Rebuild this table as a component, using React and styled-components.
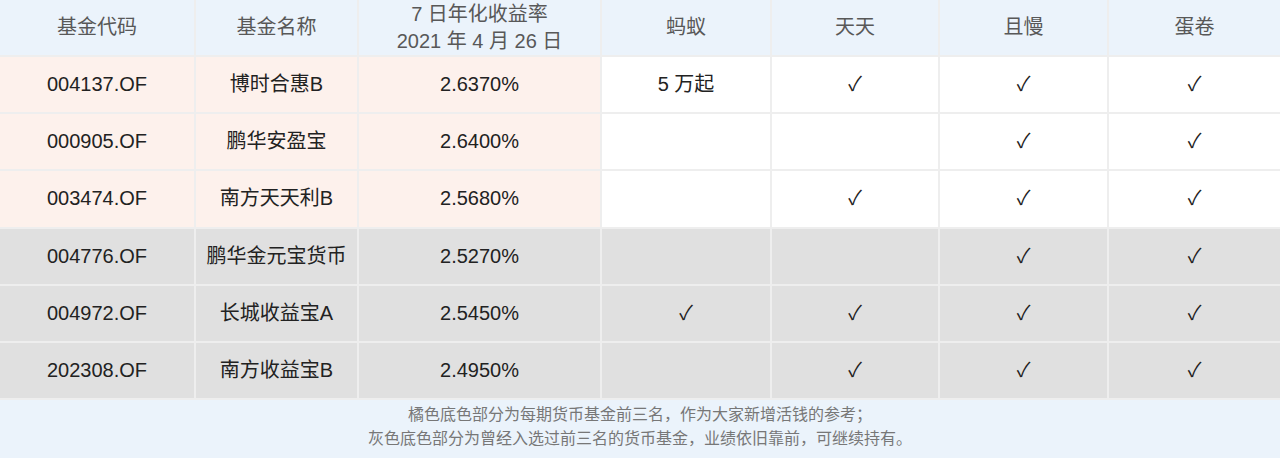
import React from "react";
import styled, { createGlobalStyle } from "styled-components";

const GlobalStyle = createGlobalStyle`
  body {
    margin: 0;
    background: #ffffff;
    font-family: "Liberation Sans", "Noto Sans CJK SC", sans-serif;
  }
`;

const Table = styled.div`
  display: grid;
  grid-template-columns: 196px 163px 243px 170px 168px 169px 1fr;
  grid-template-rows: repeat(7, 57.14px) 1fr;
  width: 1280px;
  height: 458px;
  background-color: #ffffff;
`;

const bgMap = {
  head: "#ebf3fb",
  orange: "#fdf1ec",
  gray: "#e0e0e0",
  white: "#ffffff",
};

const Cell = styled.div`
  display: flex;
  flex-direction: column;
  align-items: center;
  justify-content: center;
  background-color: ${(p) => bgMap[p.$bg]};
  border-right: 2px solid #eeeeee;
  border-bottom: 2px solid #eeeeee;
  color: ${(p) => (p.$bg === "head" ? "#585858" : "#222222")};
  font-size: 20px;
  line-height: 27px;
  box-sizing: border-box;

  &:nth-child(7n) {
    border-right: none;
  }
`;

const Footer = styled.div`
  grid-column: 1 / -1;
  background-color: #ebf3fb;
  color: #777777;
  font-size: 16px;
  line-height: 24px;
  text-align: center;
  padding-top: 3px;
`;

const heads = ["基金代码", "基金名称", null, "蚂蚁", "天天", "且慢", "蛋卷"];

const rows = [
  { code: "004137.OF", name: "博时合惠B", rate: "2.6370%", marks: ["5 万起", true, true, true], tone: "orange" },
  { code: "000905.OF", name: "鹏华安盈宝", rate: "2.6400%", marks: ["", false, true, true], tone: "orange" },
  { code: "003474.OF", name: "南方天天利B", rate: "2.5680%", marks: ["", true, true, true], tone: "orange" },
  { code: "004776.OF", name: "鹏华金元宝货币", rate: "2.5270%", marks: ["", false, true, true], tone: "gray" },
  { code: "004972.OF", name: "长城收益宝A", rate: "2.5450%", marks: [true, true, true, true], tone: "gray" },
  { code: "202308.OF", name: "南方收益宝B", rate: "2.4950%", marks: ["", true, true, true], tone: "gray" },
];

const App = () => {
  return (
    <>
      <GlobalStyle />
      <Table>
        {heads.map((h, i) => (
          <Cell key={"h" + i} $bg="head">
            {h === null ? (
              <>
                <span>7 日年化收益率</span>
                <span>2021 年 4 月 26 日</span>
              </>
            ) : (
              h
            )}
          </Cell>
        ))}
        {rows.map((r) => {
          // 橘色行只有前三列上色，后面平台列保持白底
          const rest = r.tone === "orange" ? "white" : "gray";
          return (
            <React.Fragment key={r.code}>
              <Cell $bg={r.tone}>{r.code}</Cell>
              <Cell $bg={r.tone}>{r.name}</Cell>
              <Cell $bg={r.tone}>{r.rate}</Cell>
              {r.marks.map((m, j) => (
                <Cell key={j} $bg={rest}>
                  {m === true ? "✓" : m || ""}
                </Cell>
              ))}
            </React.Fragment>
          );
        })}
        <Footer>
          橘色底色部分为每期货币基金前三名，作为大家新增活钱的参考；
          <br />
          灰色底色部分为曾经入选过前三名的货币基金，业绩依旧靠前，可继续持有。
        </Footer>
      </Table>
    </>
  );
};

export default App;
